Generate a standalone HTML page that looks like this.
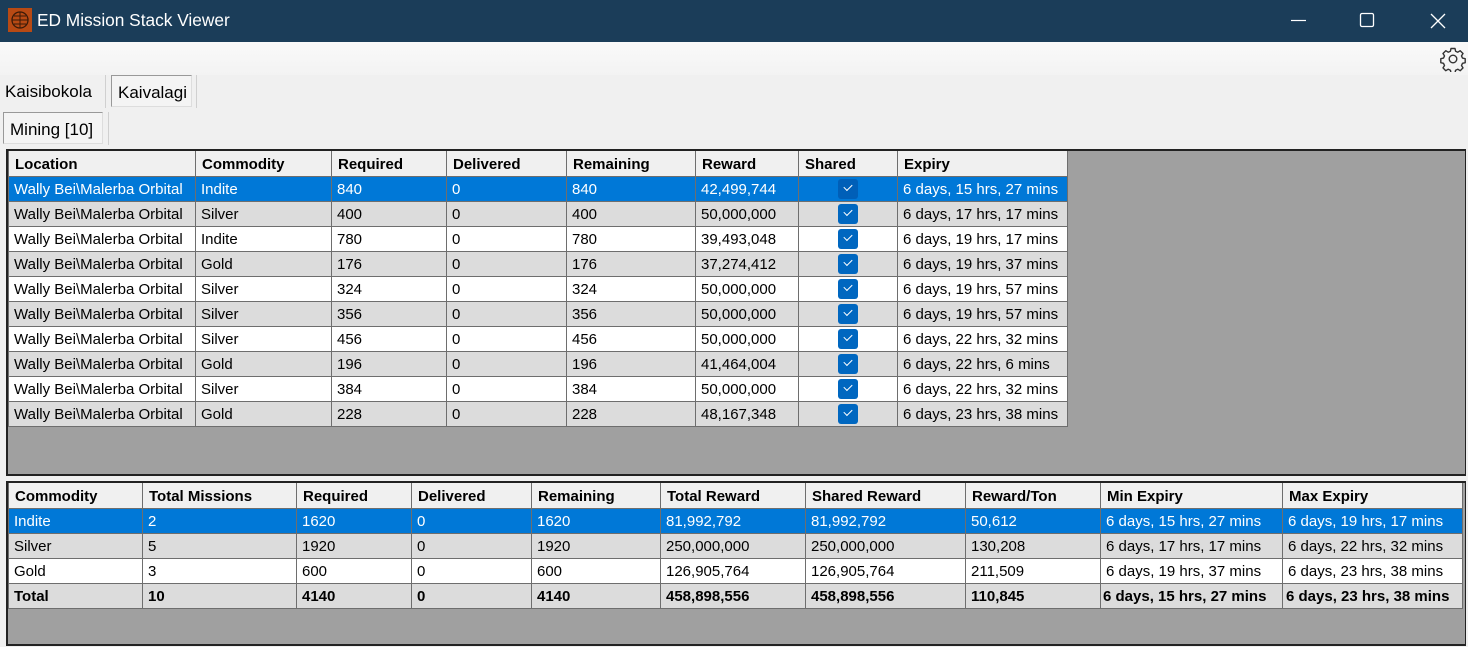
<!DOCTYPE html>
<html><head><meta charset="utf-8"><style>
*{margin:0;padding:0;box-sizing:border-box}
body{width:1468px;height:647px;background:#f0f0f0;font-family:"Liberation Sans",sans-serif;font-size:15px;color:#000;position:relative;overflow:hidden}
.title{position:absolute;left:0;top:0;width:1468px;height:42px;background:#1b3d59;color:#fff}
.title .t{position:absolute;left:37px;top:10px;font-size:17.3px}
.icon{position:absolute;left:8px;top:8px;width:24px;height:24px;background:#b84a14}
.band{position:absolute;left:0;top:42px;width:1468px;height:33px;background:linear-gradient(#f9f9f9,#f3f3f3)}
.tab{position:absolute;font-size:17px}
.box{position:absolute;border:2px solid #222;background:#a0a0a0;border-right-width:1px}
table{position:absolute;border-collapse:collapse;table-layout:fixed}
td,th{height:25px;border:1px solid #6e6e6e;padding:2px 0 0 5px;white-space:nowrap;overflow:hidden;text-align:left;font-weight:normal;vertical-align:middle}
th{background:#f0f0f0;font-weight:bold;border-top:none;padding-left:6px}
tr.w td{background:#fff}
tr.g td{background:#dcdcdc}
tr.s td{background:#0078d7;color:#fff}
tr.b td{font-weight:bold;background:#dcdcdc}
.cb{display:inline-block;width:20px;height:20px;background:#0067c0;border-radius:3px;vertical-align:middle;position:relative;margin-left:34px;margin-top:-2px}
.cb:after{content:"";position:absolute;left:6px;top:5px;width:7px;height:4px;border-left:1.5px solid #fff;border-bottom:1.5px solid #fff;transform:rotate(-45deg)}
tr.s .cb{background:#005fb8}
</style></head><body>
<div class="title"><div class="icon"><svg width="24" height="24"><circle cx="12" cy="12" r="8" fill="none" stroke="#3a1a08" stroke-width="1.3"/><path d="M4 12h16M12 4v16M6 8h12M6 16h12" stroke="#3a1a08" stroke-width="1"/></svg></div><div class="t">ED Mission Stack Viewer</div>
<svg style="position:absolute;left:1290px;top:12px" width="170" height="20"><path d="M1 8.5h15" stroke="#fff" stroke-width="1.2"/><rect x="70.5" y="1.5" width="13" height="13" rx="1.5" fill="none" stroke="#fff" stroke-width="1.3"/><path d="M141 2l14 14M155 2l-14 14" stroke="#fff" stroke-width="1.3"/></svg></div>
<div class="band"></div>
<svg style="position:absolute;left:1440px;top:46px" width="26" height="26" viewBox="0 0 26 26"><circle cx="13" cy="13" r="3.8" fill="none" stroke="#333" stroke-width="1.4"/><path d="M11 2.5h4l.6 2.7 2.2 1 2.4-1.5 2.8 2.8-1.5 2.4 1 2.2 2.7.6v4l-2.7.6-1 2.2 1.5 2.4-2.8 2.8-2.4-1.5-2.2 1-.6 2.7h-4l-.6-2.7-2.2-1-2.4 1.5-2.8-2.8 1.5-2.4-1-2.2-2.7-.6v-4l2.7-.6 1-2.2-1.5-2.4 2.8-2.8 2.4 1.5 2.2-1z" fill="none" stroke="#333" stroke-width="1.4" stroke-linejoin="round"/></svg>
<div class="tab" style="left:5px;top:82px">Kaisibokola</div>
<div style="position:absolute;left:105px;top:75px;width:1px;height:33px;background:#d0d0d0"></div>
<div style="position:absolute;left:111px;top:75px;width:81px;height:32px;border:1px solid #999;border-right-color:#ddd;border-bottom-color:#ddd;background:#f4f4f4"></div>
<div style="position:absolute;left:196px;top:75px;width:1px;height:33px;background:#d0d0d0"></div>
<div class="tab" style="left:118px;top:83px">Kaivalagi</div>
<div style="position:absolute;left:3px;top:112px;width:100px;height:32px;border:1px solid #999;border-right-color:#ddd;border-bottom-color:#ddd;background:#f4f4f4"></div>
<div style="position:absolute;left:108px;top:112px;width:1px;height:33px;background:#d0d0d0"></div>
<div class="tab" style="left:10px;top:120px">Mining [10]</div>

<div class="box" style="left:6px;top:149px;width:1460px;height:327px"></div>
<table style="left:8px;top:151px;width:1059px">
<colgroup><col style="width:187px"><col style="width:136px"><col style="width:115px"><col style="width:120px"><col style="width:129px"><col style="width:103px"><col style="width:99px"><col style="width:170px"></colgroup>
<tr><th>Location</th><th>Commodity</th><th>Required</th><th>Delivered</th><th>Remaining</th><th>Reward</th><th>Shared</th><th>Expiry</th></tr>
<tr class="s"><td>Wally Bei\Malerba Orbital</td><td>Indite</td><td>840</td><td>0</td><td>840</td><td>42,499,744</td><td><span class="cb"></span></td><td>6 days, 15 hrs, 27 mins</td></tr>
<tr class="g"><td>Wally Bei\Malerba Orbital</td><td>Silver</td><td>400</td><td>0</td><td>400</td><td>50,000,000</td><td><span class="cb"></span></td><td>6 days, 17 hrs, 17 mins</td></tr>
<tr class="w"><td>Wally Bei\Malerba Orbital</td><td>Indite</td><td>780</td><td>0</td><td>780</td><td>39,493,048</td><td><span class="cb"></span></td><td>6 days, 19 hrs, 17 mins</td></tr>
<tr class="g"><td>Wally Bei\Malerba Orbital</td><td>Gold</td><td>176</td><td>0</td><td>176</td><td>37,274,412</td><td><span class="cb"></span></td><td>6 days, 19 hrs, 37 mins</td></tr>
<tr class="w"><td>Wally Bei\Malerba Orbital</td><td>Silver</td><td>324</td><td>0</td><td>324</td><td>50,000,000</td><td><span class="cb"></span></td><td>6 days, 19 hrs, 57 mins</td></tr>
<tr class="g"><td>Wally Bei\Malerba Orbital</td><td>Silver</td><td>356</td><td>0</td><td>356</td><td>50,000,000</td><td><span class="cb"></span></td><td>6 days, 19 hrs, 57 mins</td></tr>
<tr class="w"><td>Wally Bei\Malerba Orbital</td><td>Silver</td><td>456</td><td>0</td><td>456</td><td>50,000,000</td><td><span class="cb"></span></td><td>6 days, 22 hrs, 32 mins</td></tr>
<tr class="g"><td>Wally Bei\Malerba Orbital</td><td>Gold</td><td>196</td><td>0</td><td>196</td><td>41,464,004</td><td><span class="cb"></span></td><td>6 days, 22 hrs, 6 mins</td></tr>
<tr class="w"><td>Wally Bei\Malerba Orbital</td><td>Silver</td><td>384</td><td>0</td><td>384</td><td>50,000,000</td><td><span class="cb"></span></td><td>6 days, 22 hrs, 32 mins</td></tr>
<tr class="g"><td>Wally Bei\Malerba Orbital</td><td>Gold</td><td>228</td><td>0</td><td>228</td><td>48,167,348</td><td><span class="cb"></span></td><td>6 days, 23 hrs, 38 mins</td></tr>
</table>

<div class="box" style="left:6px;top:481px;width:1460px;height:165px"></div>
<table style="left:8px;top:483px;width:1454px">
<colgroup><col style="width:134px"><col style="width:154px"><col style="width:115px"><col style="width:120px"><col style="width:129px"><col style="width:145px"><col style="width:160px"><col style="width:135px"><col style="width:182px"><col style="width:180px"></colgroup>
<tr><th>Commodity</th><th>Total Missions</th><th>Required</th><th>Delivered</th><th>Remaining</th><th>Total Reward</th><th>Shared Reward</th><th>Reward/Ton</th><th>Min Expiry</th><th>Max Expiry</th></tr>
<tr class="s"><td>Indite</td><td>2</td><td>1620</td><td>0</td><td>1620</td><td>81,992,792</td><td>81,992,792</td><td>50,612</td><td>6 days, 15 hrs, 27 mins</td><td>6 days, 19 hrs, 17 mins</td></tr>
<tr class="g"><td>Silver</td><td>5</td><td>1920</td><td>0</td><td>1920</td><td>250,000,000</td><td>250,000,000</td><td>130,208</td><td>6 days, 17 hrs, 17 mins</td><td>6 days, 22 hrs, 32 mins</td></tr>
<tr class="w"><td>Gold</td><td>3</td><td>600</td><td>0</td><td>600</td><td>126,905,764</td><td>126,905,764</td><td>211,509</td><td>6 days, 19 hrs, 37 mins</td><td>6 days, 23 hrs, 38 mins</td></tr>
<tr class="b"><td>Total</td><td>10</td><td>4140</td><td>0</td><td>4140</td><td>458,898,556</td><td>458,898,556</td><td>110,845</td><td style="padding-left:2px">6 days, 15 hrs, 27 mins</td><td style="padding-left:3px">6 days, 23 hrs, 38 mins</td></tr>
</table>
</body></html>
